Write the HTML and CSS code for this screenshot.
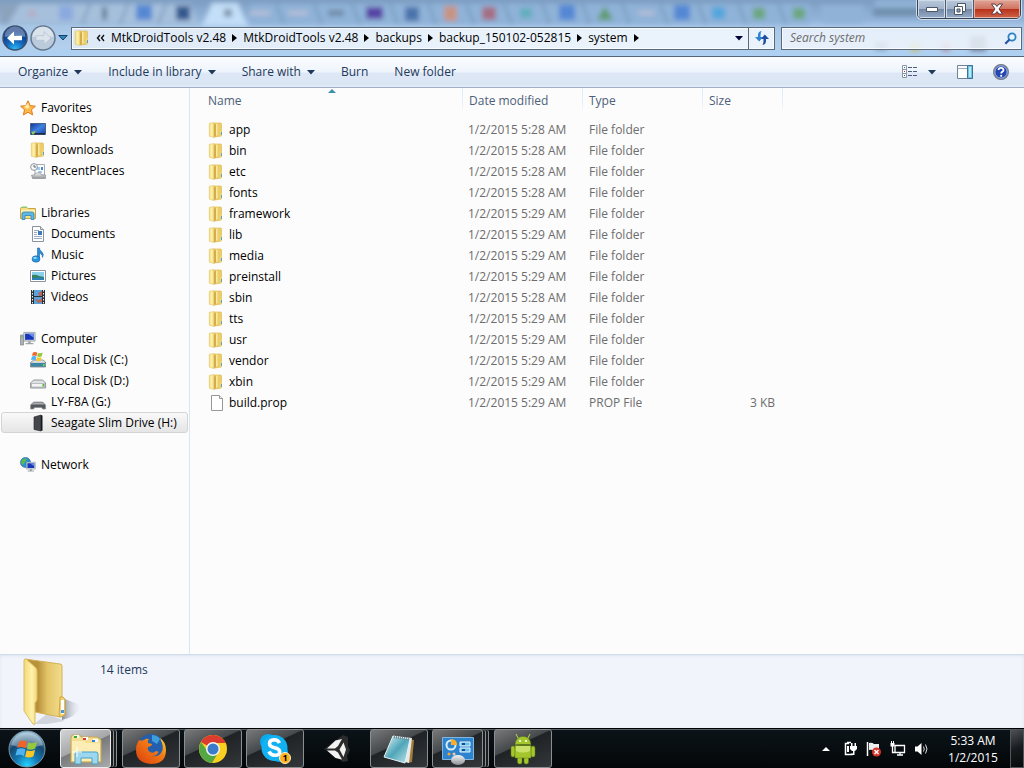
FILE: index.html
```html
<!DOCTYPE html>
<html lang="en">
<head>
<meta charset="utf-8">
<title>system</title>
<link rel="stylesheet" href="styles.css">
</head>
<body>
<svg class="defs" width="0" height="0" aria-hidden="true">
  <defs>
    <linearGradient id="gold" x1="0" x2="1"><stop offset="0" stop-color="#f3dc78"/><stop offset=".45" stop-color="#fff3b0"/><stop offset="1" stop-color="#dfb94c"/></linearGradient>
    <linearGradient id="blue" x1="0" y1="0" x2="1" y2="1"><stop offset="0" stop-color="#12329c"/><stop offset=".5" stop-color="#3e83e0"/><stop offset="1" stop-color="#1b3fa8"/></linearGradient>
    <linearGradient id="metal" x1="0" y1="0" x2="0" y2="1"><stop offset="0" stop-color="#f4f4f4"/><stop offset="1" stop-color="#8d9196"/></linearGradient>
    <linearGradient id="flap" x1="0" x2="1"><stop offset="0" stop-color="#f3d878"/><stop offset=".6" stop-color="#fff2ac"/><stop offset="1" stop-color="#f2d87c"/></linearGradient>
    <linearGradient id="inside" x1="0" x2="1"><stop offset="0" stop-color="#b8923b"/><stop offset=".35" stop-color="#b8923b"/><stop offset=".6" stop-color="#e3c468"/><stop offset="1" stop-color="#f2dc8c"/></linearGradient>
    <linearGradient id="shade" x1="0" x2="1"><stop offset="0" stop-color="#888d98"/><stop offset="1" stop-color="#f1f4fb" stop-opacity="0"/></linearGradient>
    <radialGradient id="orb" cx=".5" cy=".95" r=".9"><stop offset="0" stop-color="#25d4ff"/><stop offset=".35" stop-color="#1479b4"/><stop offset=".7" stop-color="#17486f"/><stop offset="1" stop-color="#8bb5cc"/></radialGradient>
    <radialGradient id="nav" cx=".5" cy="1" r=".8"><stop offset="0" stop-color="#29c3ff"/><stop offset=".5" stop-color="#1463ba"/><stop offset="1" stop-color="#0b3580"/></radialGradient>
    <linearGradient id="fox" x1="0" y1="1" x2="1" y2="0"><stop offset="0" stop-color="#d93c10"/><stop offset=".6" stop-color="#f37a14"/><stop offset="1" stop-color="#ffd531"/></linearGradient>
    <linearGradient id="note" x1="0" y1="0" x2="1" y2="1"><stop offset="0" stop-color="#e5f7fa"/><stop offset=".5" stop-color="#4fa5b8"/><stop offset="1" stop-color="#c4e8ee"/></linearGradient>
    <filter id="soft" x="-10%" y="-30%" width="120%" height="160%"><feGaussianBlur stdDeviation="2.500"/></filter>
    <symbol id="folder" viewBox="0 0 16 16">
      <path d="M7 1h6l.5 1v12L7 15z" fill="#eccd68" stroke="#d8b54c" stroke-width=".6"/>
      <path d="M1.300 1.300L6 .6l1 .6v13.600l-1 .7-4.700-1.300z" fill="url(#gold)" stroke="#e0c468" stroke-width=".6"/>
      <path d="M6 3l3-1.500V13L6 15.400z" fill="#d3ad4d"/><path d="M8 1.500h1.500V13L8 14z" fill="#f9e89d"/>
      <path d="M12 8h2v6h-2z" fill="#efd36d"/><path d="M13 10h1v3h-1z" fill="#4fa3d8"/>
    </symbol>
    <symbol id="file" viewBox="0 0 16 16"><path d="M3.500.500h8l3 3v12h-11z" fill="#fff" stroke="#979797"/><path d="M11.500.5v3h3" fill="#f2f2f2" stroke="#979797"/></symbol>
    <symbol id="winflag" viewBox="0 0 20 20">
      <path d="M3 4Q6 2 9.500 4L8.500 9.500Q5 7.500 1.500 9z" fill="#f0642a"/><path d="M10.500 4.500Q14 6 18 4L16.500 9.500Q13 11.500 9.500 10z" fill="#94c83d"/>
      <path d="M1.300 10.200Q5 8.500 8.300 10.500L7 16Q4 14 0 15.500z" fill="#4fb3f0"/><path d="M9.300 11Q13 12.500 16.300 10.600L15 16Q11.500 18 8 16.500z" fill="#fbc727"/>
    </symbol>
    <symbol id="monitor" viewBox="0 0 16 16"><path d="M2 1h13v10H2z" fill="#d8dde2" stroke="#7d858c" stroke-width=".7"/><path d="M3.500 2.500h10v7h-10z" fill="#1837bb"/><path d="M7 2.500h6.500V7z" fill="#6a8cec"/><path d="M7 11h3v2h-3zM4 13h9v1.500H4z" fill="#9ca4aa"/></symbol>
  </defs>
</svg>

<header class="titlebar">
  <svg class="glass" viewBox="0 0 1024 56" preserveAspectRatio="none" aria-hidden="true">
    <g filter="url(#soft)">
      <path d="M0 0h35L12 24H0z" fill="#8ba3bd"/><path d="M20 4h170l8 20H8z" fill="#a6c0dc"/>
      <path d="M212 3h26l10 23h-46z" fill="#c3def7"/><path d="M250 4h560v20H250z" fill="#8fb2d8"/>
      <path d="M0 0h1024v3H0z" fill="#7c9cc0"/><path d="M820 5h44v18h-40zM875 0h45v10h-45z" fill="#8fb2d6"/>
      <path d="M873 8h48v8h-48z" fill="#708fae"/>
      <path d="M28 10h8v7h-8z" fill="#b5aec5"/><path d="M59 6h14v14H59z" fill="#8aa9df"/><path d="M102 7h5v13h-5z" fill="#657d98"/>
      <path d="M136 5h16v15h-16zM559 5h16v15h-16zM674 5h16v15h-16z" fill="#5588d4"/><path d="M176 6h14v14h-14z" fill="#31598f"/>
      <path d="M224 9h8v8h-8z" fill="#8195b0"/><path d="M250 11h20v4h-20zM288 11h20v4h-20zM638 11h16v4h-16z" fill="#b9bfd5"/>
      <path d="M328 10h16v6h-16z" fill="#7189a6"/><path d="M366 7h17v12h-17z" fill="#5842a5"/><path d="M405 7h14v14h-14z" fill="#4c73ab"/>
      <path d="M444 6h13v15h-13z" fill="#c79483"/><path d="M482 7h14v13h-14z" fill="#a56e83"/><path d="M520 8h12v10h-12z" fill="#62aebe"/>
      <path d="M605 6l8 14h-16z" fill="#5f9c6b"/><path d="M712 7h13v12h-13z" fill="#53a6dd"/><path d="M753 8h12v11h-12zM793 8h12v11h-12z" fill="#6ca77b"/>
      <path d="M90 4l-8 20M128 4l-8 20M166 4l-8 20M276 4l8 20M314 4l8 20M352 4l8 20M390 4l8 20M428 4l8 20M466 4l8 20M504 4l8 20M542 4l8 20M582 4l8 20M622 4l8 20M660 4l8 20M698 4l8 20M738 4l8 20M778 4l8 20" fill="none" stroke="#7494b8" stroke-width="2"/>
    </g>
    <g filter="url(#soft)"><path d="M875 42h12v8h-12z" fill="#8195aa"/><path d="M910 43h10v8h-10z" fill="#c2bb6b"/><path d="M942 43h8v8h-8z" fill="#b78798"/><path d="M970 36h16v15h-16z" fill="#6d7a94"/></g>
  </svg>
  <div class="winctl">
    <button aria-label="Minimize"><svg width="14" height="8"><path d="M1.500 2.500h11v4h-11z" fill="#fff" stroke="#4b5665"/></svg></button>
    <button aria-label="Restore"><svg width="14" height="14"><path d="M4.500 1.500h8v8h-8z" fill="#fff" stroke="#4b5665"/><path d="M1.500 4.500h8v8h-8z" fill="#fff" stroke="#4b5665"/><path d="M4 7h3v3H4z" fill="#8da1bb" stroke="#4b5665"/></svg></button>
    <button class="close" aria-label="Close"><svg width="14" height="12"><path d="M1.500 1h3.500l2 2.500L9 1h3.500L9 6l3.500 5H9L7 8.500 5 11H1.500L5 6z" fill="#fff" stroke="#5b3a42"/></svg></button>
  </div>
  <div class="navrow">
    <div class="navbtns">
      <button aria-label="Back"><svg width="26" height="26"><circle cx="13" cy="13" r="12" fill="url(#nav)" stroke="#39516f" stroke-width="1.500"/><path d="M2.500 12a10.500 10.500 0 0 1 21 0Q13 9 2.500 12z" fill="#fff" opacity=".35"/><path d="M5 13l7-6.500v4.200h8v4.600h-8v4.200z" fill="#fff"/></svg></button>
      <button aria-label="Forward"><svg width="26" height="26"><circle cx="13" cy="13" r="12" fill="#bccbdc" stroke="#64788e" stroke-width="1.500"/><path d="M2.500 12a10.500 10.500 0 0 1 21 0Q13 9 2.500 12z" fill="#fff" opacity=".45"/><path d="M21 13l-7-6.500v4.200H6v4.600h8v4.200z" fill="#dbe4ed" stroke="#aebccb" stroke-width=".6"/></svg></button>
      <button aria-label="Recent locations"><svg width="10" height="6"><path d="M.8.500h8.400L5 5z" fill="#2c8abf" stroke="#173d6b"/></svg></button>
    </div>
    <nav class="address" aria-label="Address">
      <svg class="afolder" width="16" height="16"><use href="#folder"/></svg>
      <button class="more" aria-label="Earlier folders"><svg width="9" height="8"><path d="M4 1L1.500 4 4 7M8 1L5.500 4 8 7" fill="none" stroke="#111" stroke-width="1.400"/></svg></button>
      <a class="crumb" href="#">MtkDroidTools v2.48</a><svg class="sep" width="5" height="8"><path d="M0 0l5 4-5 4z"/></svg>
      <a class="crumb" href="#">MtkDroidTools v2.48</a><svg class="sep" width="5" height="8"><path d="M0 0l5 4-5 4z"/></svg>
      <a class="crumb" href="#">backups</a><svg class="sep" width="5" height="8"><path d="M0 0l5 4-5 4z"/></svg>
      <a class="crumb" href="#">backup_150102-052815</a><svg class="sep" width="5" height="8"><path d="M0 0l5 4-5 4z"/></svg>
      <a class="crumb" href="#">system</a><svg class="sep" width="5" height="8"><path d="M0 0l5 4-5 4z"/></svg>
      <button class="history" aria-label="Previous locations"><svg width="8" height="5"><path d="M0 0h8L4 4.500z" fill="#00003c"/></svg></button>
      <button class="refresh" aria-label="Refresh"><svg width="14" height="14"><path d="M6.500 0Q3 .5 3 4v2H0l4.200 4.500L8 6H5.500V4Q5.500 1.500 6.500 0z" fill="#2f83d0"/><path d="M7.500 14Q11 13.500 11 10V8h3L9.800 3.500 6 8h2.500v2q0 2.500-1 4z" fill="#1f4f9e"/></svg></button>
    </nav>
    <form class="search"><input type="text" placeholder="Search system" aria-label="Search system"><button type="button" aria-label="Search"><svg width="13" height="13"><circle cx="8" cy="5" r="3.600" fill="#e5f4fd" stroke="#2e7fc4" stroke-width="1.800"/><path d="M5.500 7.500L1.300 11.700" stroke="#2b53a0" stroke-width="2.200"/></svg></button></form>
  </div>
</header>

<div class="toolbar">
  <button>Organize <svg class="tri" width="8" height="5"><path d="M0 0h8L4 4.500z"/></svg></button>
  <button>Include in library <svg class="tri" width="8" height="5"><path d="M0 0h8L4 4.500z"/></svg></button>
  <button>Share with <svg class="tri" width="8" height="5"><path d="M0 0h8L4 4.500z"/></svg></button>
  <button>Burn</button>
  <button>New folder</button>
  <div class="tools">
    <button class="view" aria-label="Change your view"><svg width="16" height="14"><path d="M.5.500h4v4h-4zM.5 4.500h4v4h-4zM.5 8.500h4v4h-4z" fill="#fff" stroke="#8795a8"/><path d="M2 2h1v1H2zM2 10h1v1H2z" fill="#37629a"/><path d="M2 6h1v1H2z" fill="#d22"/><path d="M6 2.500h4m1 0h4M6 6.500h4m1 0h4M6 10.500h4m1 0h4" stroke="#485f80"/></svg></button>
    <button class="viewmore" aria-label="More view options"><svg class="tri" width="8" height="5"><path d="M0 0h8L4 4.500z"/></svg></button>
    <button class="pane" aria-label="Show the preview pane"><svg width="16" height="14"><path d="M.5.500h15v13H.5z" fill="#fff" stroke="#6e839b"/><path d="M.5 3.500h15" stroke="#9cabbd"/><path d="M10.500.500h5v13h-5z" fill="#6ec5e6" stroke="#3f7298"/><path d="M12 2h2v10h-2z" fill="#b7ebf8"/></svg></button>
    <button class="help" aria-label="Get help"><svg width="16" height="16"><circle cx="8" cy="8" r="7.400" fill="#2346b5" stroke="#777f88" stroke-width="1.200"/><circle cx="8" cy="8" r="6.200" fill="none" stroke="#d7dfe8" stroke-width=".8"/><path d="M5.500 6Q5.700 3.800 8 3.800T10.500 6Q10.500 7 9.300 7.800 8.200 8.500 8.200 9.600" fill="none" stroke="#fff" stroke-width="1.800"/><circle cx="8.200" cy="11.800" r="1.100" fill="#fff"/></svg></button>
  </div>
</div>

<div class="main">
  <nav class="side" aria-label="Folders">
    <ul>
      <li><a href="#" class="top"><svg width="16" height="16"><path d="M8 .8l2.200 4.800 5.200.6-3.900 3.500 1.100 5.200L8 12.300l-4.600 2.600 1.100-5.200L.6 6.200l5.200-.6z" fill="#fdb94a" stroke="#e07a1c"/><path d="M8 3l1.500 3.500L8 9 4 7z" fill="#ffe9a5"/></svg>Favorites</a></li>
      <li><a href="#"><svg width="16" height="16"><path d="M.5 2.500h15v11H.5z" fill="url(#blue)" stroke="#4a6287"/><path d="M1 12h14v1.500H1z" fill="#1c2a42"/><circle cx="3" cy="12" r="1.500" fill="#7bd15a"/><circle cx="4.500" cy="11" r=".8" fill="#f9c032"/></svg>Desktop</a></li>
      <li><a href="#"><svg width="16" height="16"><use href="#folder"/></svg>Downloads</a></li>
      <li><a href="#"><svg width="16" height="16"><path d="M5 1.500h9.500V12H5z" fill="#fff" stroke="#a4adb5"/><path d="M7 4h3v3H7zM8 8h4v2H8z" fill="#a6cbef"/><path d="M11 4h2v3h-2z" fill="#4389d9"/><path d="M1.500 12h3l1-2h5l1 2h4v3.500h-13z" fill="url(#metal)" stroke="#83898f" stroke-width=".6"/><circle cx="4" cy="4" r="3.400" fill="#f6f8fa" stroke="#8e989f"/><path d="M4 2v2h2" fill="none" stroke="#56636d"/></svg>RecentPlaces</a></li>
    </ul>
    <ul>
      <li><a href="#" class="top"><svg width="16" height="16"><path d="M1 2.500h6l1 1h7.500v10H.5v-10z" fill="#f5df86" stroke="#c7a648"/><path d="M2 1.500h5v1.500H2z" fill="#8fc774"/><path d="M1 5h14v3H1z" fill="#fff0b0"/><path d="M2 14.500V9q0-2 2-2h8q2 0 2 2v5.500h-3v-4H5v4z" fill="#61b7e4" stroke="#2d83b7" stroke-width=".8"/></svg>Libraries</a></li>
      <li><a href="#"><svg width="16" height="16"><path d="M2.500.500h8l3 3v12h-11z" fill="#fff" stroke="#8a949e"/><path d="M10.500.500v3h3" fill="#e3eaf0" stroke="#8a949e"/><path d="M4 4.500h5M4 6.500h3M4 8.500h3M4 10.500h8M4 12.500h8" stroke="#9aaac5"/><path d="M8 5h4v4H8z" fill="#3e78bd"/></svg>Documents</a></li>
      <li><a href="#"><svg width="16" height="16"><path d="M7.500 11V1h2q0 2 2 3.500 3 2.500 1 6 .5-3-3-4.500V12z" fill="#2d8dd8" stroke="#1b66aa" stroke-width=".6"/><ellipse cx="6" cy="12" rx="4" ry="3.200" fill="#2a94dc" stroke="#1b66aa" stroke-width=".6"/><ellipse cx="5" cy="11" rx="2" ry="1" fill="#8bdaf8"/></svg>Music</a></li>
      <li><a href="#"><svg width="16" height="16"><path d="M.5 2.500h15v11H.5z" fill="#fff" stroke="#8b949d"/><path d="M2 4h12v8H2z" fill="#8bd0ec"/><path d="M2 7q4-1 7 1l5 1v3H2z" fill="#35845d"/><path d="M2 10q6-1 12 0v2H2z" fill="#2c80b9"/></svg>Pictures</a></li>
      <li><a href="#"><svg width="16" height="16"><path d="M1 1h14v14H1z" fill="#2a3036"/><path d="M4 1h8v6H4zM4 8h8v7H4z" fill="#58a3db"/><path d="M8 4l4-2v5H9zM5 10l4 1 3-2v4l-4 1z" fill="#b9655c"/><path d="M2.500 1v14M13.500 1v14" stroke="#eef2f4" stroke-dasharray="1.500 1.500"/></svg>Videos</a></li>
    </ul>
    <ul>
      <li><a href="#" class="top"><svg width="16" height="16"><path d="M.5 4h3v10h-3z" fill="#aab2b7" stroke="#7a8489" stroke-width=".7"/><path d="M1 6h2" stroke="#59b84c"/><use href="#monitor" x="2" y="0" width="14" height="15"/></svg>Computer</a></li>
      <li><a href="#"><svg width="16" height="16"><path d="M1 10l3-2h9l2.500 2v5H.5v-4.500z" fill="url(#metal)" stroke="#6c747b" stroke-width=".7"/><path d="M1 11h14v3.500H1z" fill="#3b87a5"/><path d="M13 12h1.500v2H13z" fill="#67e556"/><use href="#winflag" x="1" y="-2" width="13" height="13"/></svg>Local Disk (C:)</a></li>
      <li><a href="#"><svg width="16" height="16"><path d="M.6 10l3-3h9l3 3v5H.6z" fill="#dfe2e4" stroke="#878c90" stroke-width=".9"/><path d="M1.500 10.500h13v3.500h-13z" fill="#f4f5f5" stroke="#9b9fa1" stroke-width=".6"/><path d="M12.500 11h1.500v2.500h-1.500z" fill="#52bb28"/></svg>Local Disk (D:)</a></li>
      <li><a href="#"><svg width="16" height="16"><path d="M.6 11l3-3h9l3 3v4h-3l-1-1.500h-7l-1 1.500h-3z" fill="#55595d" stroke="#909396" stroke-width=".8"/><path d="M3.500 8.500h9l2 2h-13z" fill="#a9acaf"/></svg>LY-F8A (G:)</a></li>
      <li><a href="#" class="selected"><svg width="16" height="16"><path d="M4 2l7-2v16l-7-1.500z" fill="#43464a" stroke="#222" stroke-width=".6"/><path d="M11 0l1.500.5v15L11 16z" fill="#17191b"/></svg>Seagate Slim Drive (H:)</a></li>
    </ul>
    <ul>
      <li><a href="#" class="top"><svg width="16" height="16"><circle cx="5.500" cy="5.500" r="5" fill="#2e8ed2" stroke="#1a5aa0" stroke-width=".6"/><path d="M2 3q3-3 5-1L5 5 3 8 1 6zM6 7l3-2v4z" fill="#58bd4f"/><use href="#monitor" x="5" y="4" width="11" height="12"/></svg>Network</a></li>
    </ul>
  </nav>
  <section class="list">
    <table>
      <colgroup><col class="c-name"><col class="c-date"><col class="c-type"><col class="c-size"><col></colgroup>
      <thead><tr><th class="sorted">Name<svg class="sort" width="8" height="4"><path d="M4 0l4 4H0z" fill="#3c8fae"/></svg></th><th>Date modified</th><th>Type</th><th>Size</th><th class="rest"></th></tr></thead>
      <tbody>
        <tr><td><svg width="16" height="16"><use href="#folder"/></svg><a href="#">app</a></td><td>1/2/2015 5:28 AM</td><td>File folder</td><td></td></tr>
        <tr><td><svg width="16" height="16"><use href="#folder"/></svg><a href="#">bin</a></td><td>1/2/2015 5:28 AM</td><td>File folder</td><td></td></tr>
        <tr><td><svg width="16" height="16"><use href="#folder"/></svg><a href="#">etc</a></td><td>1/2/2015 5:28 AM</td><td>File folder</td><td></td></tr>
        <tr><td><svg width="16" height="16"><use href="#folder"/></svg><a href="#">fonts</a></td><td>1/2/2015 5:28 AM</td><td>File folder</td><td></td></tr>
        <tr><td><svg width="16" height="16"><use href="#folder"/></svg><a href="#">framework</a></td><td>1/2/2015 5:29 AM</td><td>File folder</td><td></td></tr>
        <tr><td><svg width="16" height="16"><use href="#folder"/></svg><a href="#">lib</a></td><td>1/2/2015 5:29 AM</td><td>File folder</td><td></td></tr>
        <tr><td><svg width="16" height="16"><use href="#folder"/></svg><a href="#">media</a></td><td>1/2/2015 5:29 AM</td><td>File folder</td><td></td></tr>
        <tr><td><svg width="16" height="16"><use href="#folder"/></svg><a href="#">preinstall</a></td><td>1/2/2015 5:29 AM</td><td>File folder</td><td></td></tr>
        <tr><td><svg width="16" height="16"><use href="#folder"/></svg><a href="#">sbin</a></td><td>1/2/2015 5:28 AM</td><td>File folder</td><td></td></tr>
        <tr><td><svg width="16" height="16"><use href="#folder"/></svg><a href="#">tts</a></td><td>1/2/2015 5:29 AM</td><td>File folder</td><td></td></tr>
        <tr><td><svg width="16" height="16"><use href="#folder"/></svg><a href="#">usr</a></td><td>1/2/2015 5:29 AM</td><td>File folder</td><td></td></tr>
        <tr><td><svg width="16" height="16"><use href="#folder"/></svg><a href="#">vendor</a></td><td>1/2/2015 5:29 AM</td><td>File folder</td><td></td></tr>
        <tr><td><svg width="16" height="16"><use href="#folder"/></svg><a href="#">xbin</a></td><td>1/2/2015 5:29 AM</td><td>File folder</td><td></td></tr>
        <tr><td><svg width="16" height="16"><use href="#file"/></svg><a href="#">build.prop</a></td><td>1/2/2015 5:29 AM</td><td>PROP File</td><td>3 KB</td></tr>
      </tbody>
    </table>
  </section>
</div>

<footer class="details">
  <svg width="64" height="68" viewBox="0 0 64 68"><path d="M42 39l21 8q-9 12-21 14z" fill="url(#shade)"/><path d="M14 65l13-10 18 7-18 3z" fill="#bcc1cc" opacity=".6"/><path d="M5 0l35 5q2 0 2 2v50l-2 1L5 51z" fill="url(#inside)" stroke="#d3b155"/><path d="M40 38h3l2 2v16l-4 2-2-1z" fill="#f0d16a" stroke="#c69c33" stroke-width=".8"/><path d="M41 41h3v14h-3z" fill="#fff"/><path d="M41 51h3v3h-3z" fill="#4a94e8"/><path d="M4 1q0-1 2-1l10 9q1 1 1 3v29l-2 3v21q-1 1-2 0L4 52z" fill="url(#flap)" stroke="#dcbf62"/></svg>
  <p>14 items</p>
</footer>

<div class="taskbar">
  <button class="start" aria-label="Start"><svg width="38" height="38"><circle cx="19" cy="19" r="18" fill="url(#orb)" stroke="#7998a9"/><path d="M3 15a16.500 16.500 0 0 1 32 0Q19 20 3 15z" fill="#fff" opacity=".35"/><use href="#winflag" x="7" y="7" width="25" height="24"/></svg></button>
  <div class="apps">
    <button class="app active stacked" aria-label="Windows Explorer"><svg width="34" height="32"><path d="M2 5l1-3h8l1 2h16l4 3v22H2z" fill="#f4de93" stroke="#c9a850"/><path d="M5 2h5v3H5zM14 4h5v3h-5zM24 6h5v3h-5z" fill="#fff"/><path d="M5 3h3v2H5z" fill="#2bad3a"/><path d="M14 5h3v2h-3z" fill="#d63a2c"/><path d="M23 7h3v2h-3z" fill="#2f83d8"/><path d="M3 8h12l2 2h14v18H3z" fill="#fbedb4"/><path d="M6 31V21q0-2 2-2h19q2 0 2 2v10h-6v-6H12v6z" fill="#9bd7ef" stroke="#4b9fc6"/><path d="M8 14v10M3 19h10" stroke="#fff"/></svg></button>
    <button class="app" aria-label="Firefox"><svg width="32" height="32"><circle cx="16" cy="14" r="13" fill="#245fad"/><path d="M17 2q5 0 8 4l-3 5-5-3z" fill="#3e9ddd"/><path d="M4 7q2 1 5 0 2-2 5-1-2 2-1 4l4 1q0 2-4 3-1 3 2 5 3 2 6-1 3 0 2 2-2 3-6 3 6 1 9-3 3-4 1-10l-2-5q6 4 6 12 0 14-15 14Q1 30 1 17q0-5 2-8z" fill="url(#fox)"/></svg></button>
    <button class="app" aria-label="Chrome"><svg width="30" height="30"><circle cx="15" cy="15" r="14" fill="#f9cf20"/><path d="M15 15L2.900 8A14 14 0 0 1 27.700 9H15z" fill="#dc3c2d"/><path d="M3 8a14 14 0 0 0 11 21l6-10-5-3-5 2z" fill="#54a843"/><circle cx="15" cy="15" r="7" fill="#f2f4f5"/><circle cx="15" cy="15" r="5.500" fill="#3a7cca"/></svg></button>
    <button class="app" aria-label="Skype"><svg width="32" height="32"><circle cx="9" cy="9" r="8" fill="#09a9ec"/><circle cx="20" cy="20" r="9" fill="#09a9ec"/><circle cx="15.500" cy="15" r="13" fill="#12b2f2"/><path d="M20.500 10Q19 6.800 15 6.800 10.500 7 10.500 10.500q0 3 5 4.200 5.200 1 5.200 4.200 0 3.300-5 3.300-4.200 0-5.700-3.700" fill="none" stroke="#fff" stroke-width="3.600"/></svg><span class="badge">1</span></button>
    <button class="app idle" aria-label="Unity"><svg width="28" height="30"><path d="M1 15L20 1l5 2v9l2 4-3 6 1 5-5 1z" fill="#2b2b2b"/><path d="M4 14.500L12.500 6.500 19 5l-4 7-3 2.500zM4 16.500h8l3 2 4 7-6.500-1.500zM16.500 15.500L20.500 8.500l2.500 7-2.500 7.500z" fill="#f2f2f2"/></svg></button>
    <button class="app" aria-label="Notepad"><svg width="32" height="32"><path d="M11 4l20 3-2 22-4 1z" fill="#a77b38"/><path d="M11 3l18 2-3 25-4-1z" fill="#e5e9e9"/><path d="M10 3l17 3-5 24L1 24z" fill="url(#note)" stroke="#e5f2f4"/><path d="M11 4l16 2" stroke="#788890" stroke-width="3" stroke-dasharray="1 1"/></svg></button>
    <button class="app stacked" aria-label="Control Panel"><svg width="32" height="32"><path d="M.5 4.500h31v22H.5z" fill="#2e83ce" stroke="#83b6df"/><circle cx="9" cy="12" r="4.500" fill="none" stroke="#d3edfa" stroke-width="2"/><path d="M9 12V6q6 0 6 6z" fill="#ffad28"/><path d="M18 9h10v4H18zM18 15h10v4H18z" fill="#67bde9" stroke="#e6f5fb"/><path d="M20 11h3M20 17h3" stroke="#164f91" stroke-width="2"/><circle cx="7" cy="21" r="1.500" fill="#ffa627"/><circle cx="12" cy="21" r="1.500" fill="#f3c9a4"/><ellipse cx="16" cy="27" rx="7" ry="5" fill="url(#metal)"/></svg></button>
    <button class="app" aria-label="Android"><svg width="26" height="32"><g fill="#a4c62d" stroke="#5f7e17" stroke-width=".5"><rect x="1" y="13" width="4" height="11" rx="2"/><rect x="21" y="13" width="4" height="11" rx="2"/><rect x="7.500" y="22" width="4.500" height="9" rx="2"/><rect x="14" y="22" width="4.500" height="9" rx="2"/><path d="M5 12.500h16V25H5zM5 11.500q1-8 8-8t8 8z"/></g><path d="M8 5L6 1M18 5l2-4" stroke="#bddc46"/><path d="M6 13h14v5q-7 3-14 0z" fill="#e4f391" opacity=".6"/><circle cx="10" cy="8" r="1" fill="#fff"/><circle cx="16" cy="8" r="1" fill="#fff"/></svg></button>
  </div>
  <div class="tray">
    <button aria-label="Show hidden icons"><svg width="8" height="4"><path d="M4 0l4 4H0z" fill="#fff"/></svg></button>
    <button aria-label="Power"><svg width="14" height="16"><path d="M6 2.500H2.500v11h7M4 1.500h4" fill="none" stroke="#fff" stroke-width="1.500"/><path d="M4 5h2v6H4z" fill="#fff"/><path d="M7 5h7v3l-2 2H9L7 8zM8 2h1.500v3H8zM11.500 2H13v3h-1.500zM10 10h1.500v4H8v-1.500h2z" fill="#fff"/></svg></button>
    <button aria-label="Action Center"><svg width="16" height="16"><path d="M1.500 1v14" stroke="#fff" stroke-width="1.500"/><path d="M3 2q3-1 5 1h5v7H8Q6 8 3 9z" fill="#eee"/><circle cx="10.500" cy="11" r="4.500" fill="#d8332b"/><path d="M8.500 9l4 4m0-4l-4 4" stroke="#fff" stroke-width="1.500"/></svg></button>
    <button aria-label="Network connection"><svg width="16" height="16"><path d="M5 4.500h9.500v7H5zM7 14h6M10 12v2M2.500 5v6.500H5" fill="none" stroke="#fff" stroke-width="1.300"/><path d="M.5 2h4v3.500h-4zM1 0h1v2H1zM3 0h1v2H3z" fill="#fff"/></svg></button>
    <button aria-label="Volume"><svg width="16" height="16"><path d="M1 5.500h2.500L7.500 2v12L3.500 10.500H1z" fill="#fff"/><path d="M9.500 5.500q1.500 2.500 0 5M11.500 3.500q3 4.500 0 9" fill="none" stroke="#ddd"/></svg></button>
  </div>
  <div class="clock"><time>5:33 AM</time><time>1/2/2015</time></div>
  <button class="show" aria-label="Show desktop"></button>
</div>
</body>
</html>
```

FILE: styles.css
```css
* { box-sizing: border-box; }
body {
  margin: 0;
  height: 100vh;
  display: flex;
  flex-direction: column;
  font: 12px/20px "Open Sans", "Noto Sans", sans-serif;
  color: #000;
  background: #fcfcfc;
  overflow: hidden;
}
button { font: inherit; color: inherit; background: none; border: 0; padding: 0; display: flex; align-items: center; justify-content: center; }
a { color: inherit; text-decoration: none; }
svg { display: block; flex: none; overflow: visible; }
.defs { position: absolute; }

.titlebar {
  position: relative;
  flex: none;
  height: 57px;
  padding-top: 25px;
  background: linear-gradient(#7f9fc4, #93b4da 20px, #a6c5e6 26px, #b3cfec 45px, #add0f3);
  border-bottom: 1px solid #53647a;
  overflow: hidden;
}
.glass { position: absolute; inset: 0; width: 100%; height: 100%; }
.winctl {
  position: absolute;
  top: -1px;
  right: 3px;
  display: flex;
  border: 1px solid #354154;
  border-radius: 0 0 5px 5px;
  overflow: hidden;
  box-shadow: 0 0 0 1px #d0deec;
}
.winctl button { width: 28px; height: 18px; background: linear-gradient(#b9c8db, #a0b2c9 50%, #7388a5 52%, #95acc9); border-right: 1px solid #4d5a6c; box-shadow: inset 0 0 0 1px #cfdbe9; }
.winctl .close { width: 46px; border: 0; background: linear-gradient(#e0a597, #cf7462 48%, #b8311b 52%, #d0664a); box-shadow: inset 0 0 0 1px #e5b1a5; }
.navrow { position: relative; display: flex; align-items: center; padding: 0 2px; }
.navbtns { display: flex; align-items: center; gap: 2px; width: 69px; }
.address {
  flex: 1;
  display: flex;
  align-items: center;
  height: 23px;
  margin-right: 6px;
  border: 1px solid #5b6a7b;
  background: linear-gradient(90deg, #dde9f6, #eaf3fc 60%);
  box-shadow: inset 0 0 0 1px #f7fbff;
}
.afolder { margin: 0 6px 0 2px; }
.more { margin-right: 6px; }
.crumb { white-space: nowrap; }
.sep { margin: 0 6px; }
.history { margin-left: auto; width: 19px; height: 100%; }
.refresh { width: 26px; height: 100%; border-left: 1px solid #5b6a7b; }
.search { display: flex; align-items: center; width: 241px; height: 23px; border: 1px solid #5b6a7b; background: rgba(240, 246, 253, .84); box-shadow: inset 0 0 0 1px #f7fbff; margin: 0; }
.search input { flex: 1; min-width: 0; border: 0; outline: 0; background: none; font: inherit; font-style: italic; padding: 0 8px; }
.search input::placeholder { color: #6d6d6d; opacity: 1; }
.search button { width: 22px; }

.toolbar {
  flex: none;
  display: flex;
  align-items: center;
  gap: 26px;
  height: 31px;
  padding: 0 15px 0 18px;
  color: #1e395b;
  background: linear-gradient(#fbfdff, #eef4fc 15px, #dde7f5 16px, #dbe6f5 28px, #e6eefa);
  border-bottom: 1px solid #a0afc3;
}
.toolbar button { gap: 6px; white-space: nowrap; }
.tri { fill: #1e395b; }
.tools { margin-left: auto; display: flex; align-items: center; }
.viewmore { margin: 0 21px 0 10px; }
.pane { margin-right: 20px; }

.main { flex: 1; min-height: 0; display: flex; }
.side { flex: none; width: 190px; padding: 9px 1px; border-right: 1px solid #d9e5f2; }
.side ul { list-style: none; margin: 0 0 21px; padding: 0; }
.side a { display: flex; align-items: center; gap: 5px; height: 21px; padding-left: 28px; border: 1px solid transparent; border-radius: 3px; white-space: nowrap; }
.side .top { padding-left: 18px; }
.side .selected { border-color: #d4d4d4; background: linear-gradient(#f9f9f9, #e5e5e5); }
.list { flex: 1; min-width: 0; padding-left: 11px; }
.list table { width: 100%; table-layout: fixed; border-collapse: separate; border-spacing: 0; }
.c-name { width: 262px; }
.c-date, .c-type { width: 120px; }
.c-size { width: 80px; }
.list th { height: 31px; padding: 3px 6px 8px; font-weight: 400; text-align: left; color: #4c607a; background: linear-gradient(#dfeaf7, #e8f0fa 16px, #fcfcfc 24px) right top / 1px 24px no-repeat; }
.list .rest { background: none; }
.list .sorted { position: relative; padding-left: 7px; }
.sort { position: absolute; top: 1px; left: 50%; margin-left: -4px; }
.list td { height: 21px; padding: 0 8px 0 5px; color: #6d6d6d; white-space: nowrap; }
.list td:first-child { display: flex; align-items: center; gap: 5px; padding-left: 7px; }
.list td:first-child a { color: #000; }
.list td:nth-child(3) { padding-left: 6px; }
.list td:nth-child(4) { text-align: right; }

.details { flex: none; display: flex; gap: 16px; height: 74px; padding: 4px 20px 0; color: #1e395b; background: #f1f4fb; border-top: 1px solid #d1dceb; box-shadow: inset 0 1px 3px #d9e3f2; }
.details p { margin: 1px 0 0; }

.taskbar { flex: none; display: flex; height: 40px; color: #fff; background: linear-gradient(#0c1419, #030608); border-top: 1px solid #000; box-shadow: inset 0 1px 0 #53616a; }
.start { width: 54px; }
.apps { display: flex; gap: 4px; padding: 0 0 0 6px; }
.app { position: relative; width: 58px; height: 39px; border: 1px solid #8b8f92; border-radius: 3px; background: linear-gradient(155deg, #77797b, #46494b 40%, #202325 42%, #33373a); }
.app.active { background: linear-gradient(155deg, #d3d4d5, #a5a7a8 45%, #77797b 47%, #a8aaab); border-color: #e8eaeb; }
.app.stacked { width: 51px; margin-right: 7px; box-shadow: 3px 0 0 -1px #1a1d1f, 4px 0 0 -1px #8b8f92, 6px 0 0 -1px #1a1d1f, 7px 0 0 -1px #8b8f92; }
.app.idle { border-color: transparent; background: none; }
.badge { position: absolute; right: 12px; bottom: 3px; width: 12px; height: 12px; border-radius: 50%; background: #ffb01f; border: 1px solid #fff0c0; color: #000; font-size: 9px; font-weight: 700; line-height: 10px; }
.tray { margin-left: auto; display: flex; align-items: center; gap: 8px; }
.tray button { width: 16px; }
.clock { width: 80px; padding-left: 6px; display: flex; flex-direction: column; justify-content: center; text-align: center; line-height: 17px; }
.show { width: 14px; border: 1px solid #50575c; background: linear-gradient(155deg, #4d5153, #181b1d 50%, #070909); }
```
